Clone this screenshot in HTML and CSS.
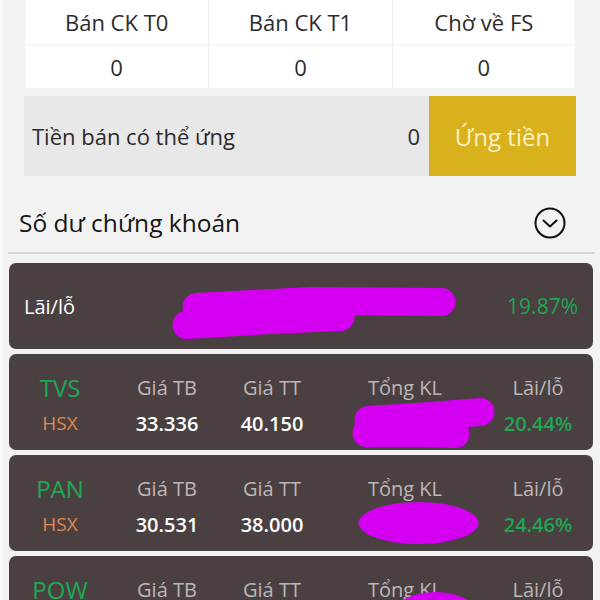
FILE: index.html
```html
<!DOCTYPE html>
<html lang="vi">
  <head>
    <meta charset="UTF-8" />
    <meta name="viewport" content="width=device-width, initial-scale=1.0" />
    <title>Tài sản</title>
    <link rel="stylesheet" href="styles.css">
  </head>
  <body>
    <div class="page">
      <!-- bảng chờ về -->
      <div class="pending">
        <div class="pending_cell pending_head">Bán CK T0</div>
        <div class="pending_cell pending_head">Bán CK T1</div>
        <div class="pending_cell pending_head">Chờ về FS</div>
        <div class="pending_cell">0</div>
        <div class="pending_cell">0</div>
        <div class="pending_cell">0</div>
      </div>

      <div class="advance">
        <div class="advance_label">Tiền bán có thể ứng</div>
        <div class="advance_value">0</div>
        <button class="advance_btn">Ứng tiền</button>
      </div>

      <div class="section_head">
        <div class="section_title">Số dư chứng khoán</div>
        <svg class="section_toggle" viewBox="0 0 32 32">
          <circle cx="16" cy="16" r="14.5" fill="none" stroke="#111" stroke-width="2"></circle>
          <path d="M9.5 13.5 L16 19.5 L22.5 13.5" fill="none" stroke="#111" stroke-width="2" stroke-linecap="round" stroke-linejoin="round"></path>
        </svg>
      </div>

      <div class="cards">
        <div class="card card_total">
          <div class="total_label">Lãi/lỗ</div>
          <div class="up total_value">19.87%</div>
          <svg class="scribble" viewBox="0 0 581 86">
            <path d="M186 44 L300 38 L431 39" />
            <path d="M176 62 L260 57 L330 54" />
          </svg>
        </div>

        <div class="card stock">
          <div class="stock_code">TVS</div>
          <div class="stock_label">Giá TB</div>
          <div class="stock_label">Giá TT</div>
          <div class="stock_label">Tổng KL</div>
          <div class="stock_label">Lãi/lỗ</div>
          <div class="stock_market">HSX</div>
          <div class="stock_value">33.336</div>
          <div class="stock_value">40.150</div>
          <div class="stock_value"></div>
          <div class="stock_value up">20.44%</div>
          <svg class="scribble" viewBox="0 0 581 96">
            <path d="M358 66 L420 62 L470 58" />
            <path d="M356 79 L410 79 L445 80" />
          </svg>
        </div>

        <div class="card stock">
          <div class="stock_code">PAN</div>
          <div class="stock_label">Giá TB</div>
          <div class="stock_label">Giá TT</div>
          <div class="stock_label">Tổng KL</div>
          <div class="stock_label">Lãi/lỗ</div>
          <div class="stock_market">HSX</div>
          <div class="stock_value">30.531</div>
          <div class="stock_value">38.000</div>
          <div class="stock_value"></div>
          <div class="stock_value up">24.46%</div>
          <svg class="scribble" viewBox="0 0 581 96">
            <ellipse cx="408" cy="68" rx="60" ry="21" />
          </svg>
        </div>

        <div class="card stock">
          <div class="stock_code">POW</div>
          <div class="stock_label">Giá TB</div>
          <div class="stock_label">Giá TT</div>
          <div class="stock_label">Tổng KL</div>
          <div class="stock_label">Lãi/lỗ</div>
          <div class="stock_market">HSX</div>
          <div class="stock_value">12.850</div>
          <div class="stock_value">13.400</div>
          <div class="stock_value"></div>
          <div class="stock_value up">4.28%</div>
          <svg class="scribble" viewBox="0 0 581 96">
            <ellipse cx="425" cy="58" rx="42" ry="22" />
          </svg>
        </div>
      </div>
    </div>
  </body>
</html>
```

FILE: styles.css
```css
*,
*:before,
*:after {
  box-sizing: border-box;
}
body {
  margin: 0;
  background: #f2f2f2;
  font-family: "Open Sans", "Noto Sans", sans-serif;
  color: #2b2b2b;
}
.page {
  border-left: 3px solid #f8f8f8;
  height: 600px;
  overflow: hidden;
}

/* bảng chờ về */
.pending {
  margin: 0 25px 0 22px;
  display: grid;
  grid-template-columns: repeat(3, 1fr);
  background: #fff;
  font-size: 22px;
}
.pending_cell {
  height: 43px;
  display: flex;
  align-items: center;
  justify-content: center;
  border-left: 1px solid #efefef;
}
.pending_cell:nth-child(3n + 1) {
  border-left: none;
}
.pending_head {
  height: 45px;
  border-bottom: 1px solid #efefef;
}

.advance {
  margin: 8px 24px 0 21px;
  height: 80px;
  display: flex;
  align-items: center;
  background: #e8e8e8;
  font-size: 22px;
}
.advance_label {
  flex: 1;
  padding-left: 8px;
}
.advance_value {
  padding-right: 9px;
}
.advance_btn {
  width: 147px;
  height: 100%;
  border: none;
  background: #d8b11c;
  color: #fbf1c2;
  font-family: inherit;
  font-size: 24px;
}

.section_head {
  margin: 0 5px;
  padding: 18px 29px 0 11px;
  height: 78px;
  display: flex;
  align-items: flex-start;
  justify-content: space-between;
  border-bottom: 2px solid #d6d6d6;
}
.section_title {
  height: 58px;
  line-height: 58px;
  font-size: 24.5px;
  color: #151515;
}
.section_toggle {
  width: 32px;
  height: 32px;
  margin-top: 13px;
}

.cards {
  margin: 9px 7px 0 6px;
  display: flex;
  flex-direction: column;
  gap: 5px;
}
.card {
  position: relative;
  background: #4a4041;
  border-radius: 7px;
  color: #fff;
  font-size: 20px;
}
.card_total {
  height: 86px;
  display: flex;
  align-items: center;
  justify-content: space-between;
  padding: 0 15px 0 15px;
}
.total_value {
  font-size: 21px;
}
.up {
  color: #20a552;
}
.stock {
  height: 96px;
  padding: 15px 0 9px 0;
  display: grid;
  grid-template-columns: 102px 112px 98px 168px 98px;
  grid-template-rows: 36px 36px;
  align-items: center;
  justify-items: center;
}
.stock_code {
  color: #1ea853;
  font-size: 24px;
}
.stock_market {
  color: #e08a4c;
  font-size: 19px;
}
.stock_label {
  color: #beb6b6;
}
.stock_value {
  font-weight: 600;
}

/* vệt che số liệu */
.scribble {
  position: absolute;
  left: 0;
  top: 0;
  width: 100%;
  height: 100%;
  pointer-events: none;
}
.scribble path {
  fill: none;
  stroke: #d500f2;
  stroke-width: 28;
  stroke-linecap: round;
  stroke-linejoin: round;
}
.scribble ellipse {
  fill: #d500f2;
}
```
